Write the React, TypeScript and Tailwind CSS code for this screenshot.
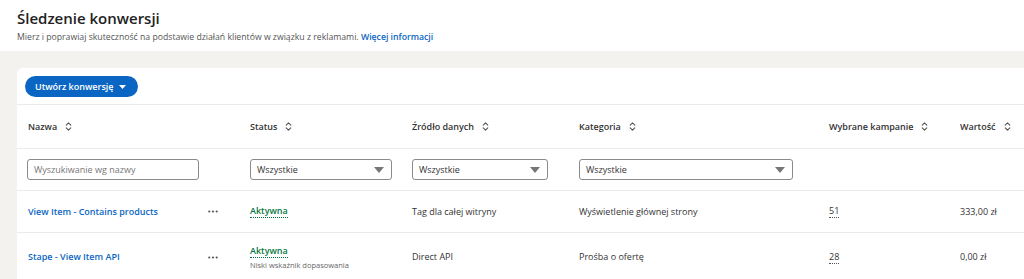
import { ChevronsUpDown } from 'lucide-react';

const font = { fontFamily: '"Open Sans", "Noto Sans", sans-serif' };

function SortLabel({ label }: { label: string }) {
  return (
    <div className="flex items-center gap-[6px] text-[9px] font-semibold text-[#333]">
      <span>{label}</span>
      <ChevronsUpDown className="h-[11px] w-[11px] text-[#555]" strokeWidth={2.4} />
    </div>
  );
}

function Select({ width }: { width: string }) {
  return (
    <div
      className={`flex h-[21px] ${width} items-center justify-between rounded-[3px] border border-[#8a8a8a] bg-white pl-[6px] pr-[7px] text-[9px] text-[#333]`}
    >
      <span>Wszystkie</span>
      <svg width="10" height="6" viewBox="0 0 10 6">
        <path d="M0 0h10L5 6z" fill="#777" />
      </svg>
    </div>
  );
}

function Status({ hint }: { hint?: string }) {
  return (
    <div className="flex flex-col">
      <span className="w-fit border-b border-dotted border-[#057642] text-[9px] font-semibold leading-[12px] text-[#057642]">
        Aktywna
      </span>
      {hint && <span className="mt-[2px] text-[7.5px] leading-[10px] text-[#666]">{hint}</span>}
    </div>
  );
}

function Dots() {
  return (
    <svg width="10" height="3" viewBox="0 0 10 3">
      <circle cx="1.3" cy="1.5" r="1.1" fill="#555" />
      <circle cx="5" cy="1.5" r="1.1" fill="#555" />
      <circle cx="8.7" cy="1.5" r="1.1" fill="#555" />
    </svg>
  );
}

const rows = [
  {
    name: 'View Item - Contains products',
    hint: undefined,
    source: 'Tag dla całej witryny',
    category: 'Wyświetlenie głównej strony',
    campaigns: '51',
    value: '333,00 zł',
    height: 'h-[42px] border-b border-[#ebebeb]',
  },
  {
    name: 'Stape - View Item API',
    hint: 'Niski wskaźnik dopasowania',
    source: 'Direct API',
    category: 'Prośba o ofertę',
    campaigns: '28',
    value: '0,00 zł',
    height: 'h-[48px]',
  },
];

const cols = 'grid grid-cols-[180px_42px_162px_167px_250px_131px_1fr] items-center pl-[11px]';

export default function App() {
  return (
    <div className="h-[279px] w-[1024px] overflow-hidden bg-[#f3f2ef]" style={font}>
      <div className="flex h-[51px] flex-col justify-center bg-white px-[17px]">
        <h1 className="text-[15px] font-semibold leading-[19px] text-[#222]">Śledzenie konwersji</h1>
        <p className="mt-[3px] text-[8.7px] leading-[12px] text-[#555]">
          Mierz i poprawiaj skuteczność na podstawie działań klientów w związku z reklamami.{' '}
          <a className="font-semibold text-[#0a66c2]">Więcej informacji</a>
        </p>
      </div>

      <div className="ml-[17px] mt-[17px] rounded-tl-[6px] bg-white">
        <div className="h-[37px] border-b border-[#ebebeb] pl-[8px] pt-[8px]">
          <button className="flex h-[21px] items-center gap-[6px] rounded-full bg-[#0a66c2] pl-[10px] pr-[12px] text-[9px] font-semibold text-white">
            Utwórz konwersję
            <svg width="7" height="4" viewBox="0 0 7 4">
              <path d="M0 0h7L3.5 4z" fill="white" />
            </svg>
          </button>
        </div>

        <div className={`${cols} h-[44px] border-b border-[#ebebeb]`}>
          <SortLabel label="Nazwa" />
          <div />
          <SortLabel label="Status" />
          <SortLabel label="Źródło danych" />
          <SortLabel label="Kategoria" />
          <SortLabel label="Wybrane kampanie" />
          <SortLabel label="Wartość" />
        </div>

        <div className={`${cols} h-[42px] border-b border-[#ebebeb]`}>
          <div className="-ml-[1px] flex h-[21px] w-[172px] items-center rounded-[3px] border border-[#8a8a8a] px-[6px] text-[9px] text-[#777]">
            Wyszukiwanie wg nazwy
          </div>
          <div />
          <Select width="w-[142px]" />
          <Select width="w-[136px]" />
          <Select width="w-[214px]" />
          <div />
          <div />
        </div>

        {rows.map((r) => (
          <div key={r.name} className={`${cols} ${r.height} text-[9px] text-[#333]`}>
            <span className="font-semibold text-[#0a66c2]">{r.name}</span>
            <Dots />
            <Status hint={r.hint} />
            <span>{r.source}</span>
            <span>{r.category}</span>
            <span className="w-fit border-b border-dotted border-[#555] leading-[12px]">{r.campaigns}</span>
            <span>{r.value}</span>
          </div>
        ))}
      </div>
    </div>
  );
}
